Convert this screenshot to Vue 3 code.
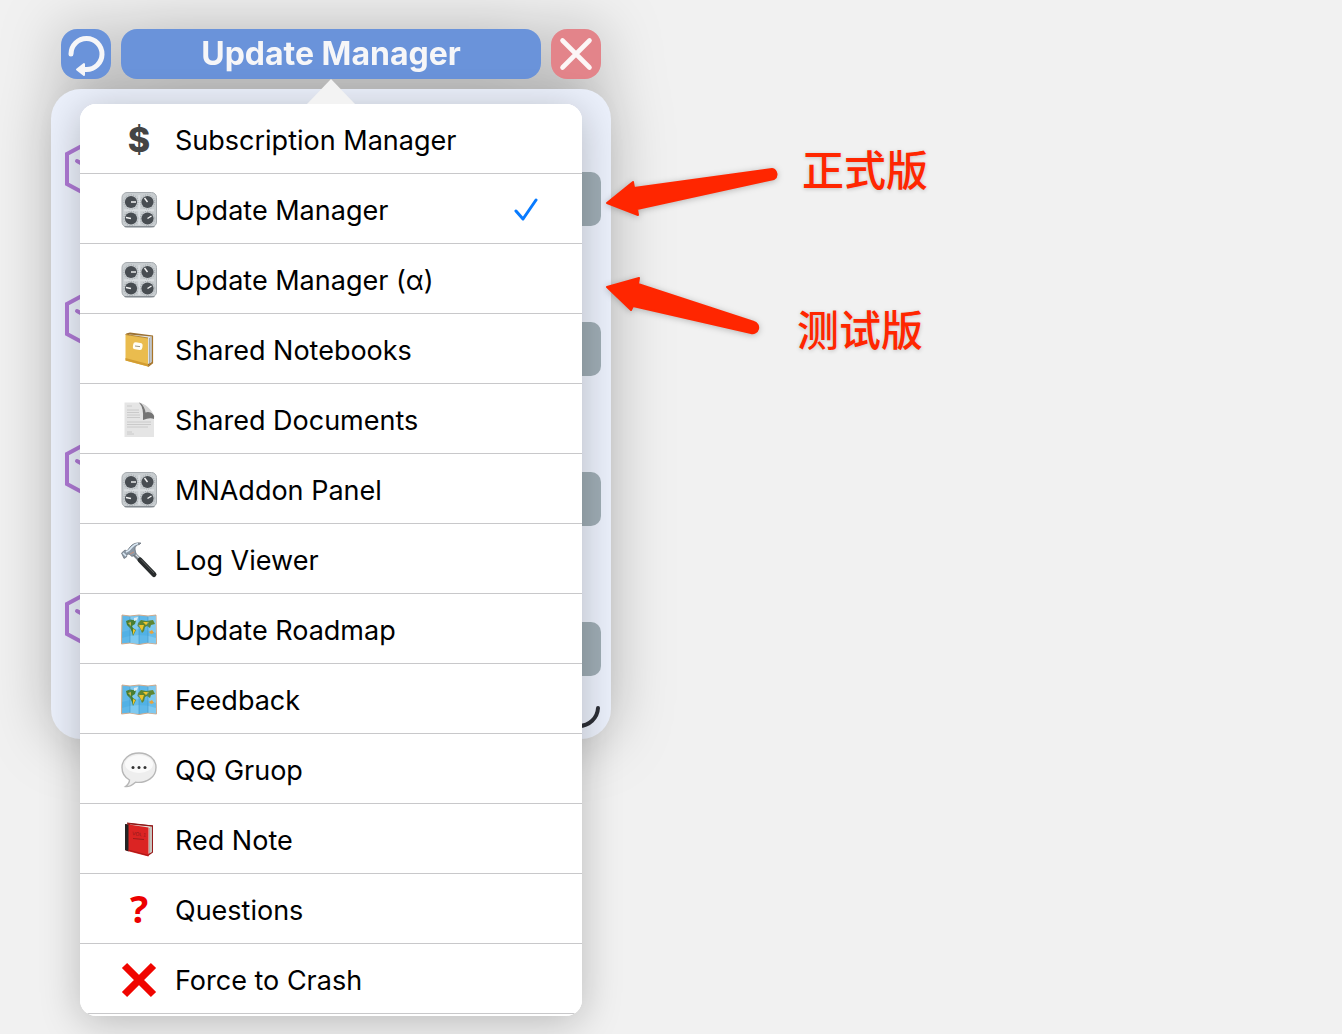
<script setup>
import { ref } from 'vue';

const items = [
  { name: 'Subscription Manager', icon: 'dollar' },
  { name: 'Update Manager', icon: 'knobs' },
  { name: 'Update Manager (α)', icon: 'knobs' },
  { name: 'Shared Notebooks', icon: 'notebook' },
  { name: 'Shared Documents', icon: 'page' },
  { name: 'MNAddon Panel', icon: 'knobs' },
  { name: 'Log Viewer', icon: 'hammer' },
  { name: 'Update Roadmap', icon: 'map' },
  { name: 'Feedback', icon: 'map' },
  { name: 'QQ Gruop', icon: 'bubble' },
  { name: 'Red Note', icon: 'book' },
  { name: 'Questions', icon: 'question' },
  { name: 'Force to Crash', icon: 'cross' },
];

const knobs = [
  { x: 10, y: 10, dx: 5, dy: 0 },
  { x: 26.5, y: 10, dx: -3, dy: -4 },
  { x: 10, y: 26.5, dx: -5, dy: -1 },
  { x: 26.5, y: 26.5, dx: 4, dy: -2.5 },
];

const current = ref(1);
</script>

<template>
  <main class="page">
    <section class="window">
      <div class="frame">
        <header class="bar">
          <button class="tool" type="button" aria-label="Refresh">
            <svg viewBox="0 0 50 50">
              <path d="M10 25A15.5 15.5 0 1 1 25 40.5H22" fill="none" stroke="#f6f6f8" stroke-width="5" stroke-linecap="round" />
              <path d="M16 40.5L23 35V46Z" fill="#f6f6f8" stroke="#f6f6f8" stroke-width="2" stroke-linejoin="round" />
            </svg>
          </button>
          <button class="title" type="button">Update Manager</button>
          <button class="tool close" type="button" aria-label="Close">
            <svg viewBox="0 0 50 50">
              <path d="M11.5 11.5L38.5 38.5M38.5 11.5L11.5 38.5" fill="none" stroke="#fcf6f6" stroke-width="4.6" stroke-linecap="round" />
            </svg>
          </button>
        </header>

        <div class="panel">
          <div v-for="n in 4" :key="n" class="addon">
            <svg class="box" viewBox="0 0 60 60">
              <path d="M32 1L6 15V45L32 59L58 45V15Z" />
              <path d="M16 22L32 31L48 22M32 31V50" />
            </svg>
            <button class="install" type="button" aria-label="Install"></button>
          </div>
          <svg class="grip" viewBox="0 0 24 24">
            <path d="M21 3A19 19 0 0 1 2 21" />
          </svg>
        </div>
      </div>

      <nav class="menu">
        <svg class="caret" viewBox="0 0 48 25"><path d="M24 0L48 25H0Z" /></svg>
        <ul class="list">
          <li v-for="(el, i) in items" :key="i">
            <button class="item" type="button" @click="current = i">
              <svg class="icon" viewBox="0 0 36 36">
                <text v-if="el.icon === 'dollar'" class="dollar" x="18" y="30" text-anchor="middle">$</text>

                <g v-else-if="el.icon === 'knobs'">
                  <rect x="1" y="0.5" width="34.5" height="34.5" rx="5" fill="#c8cdd0" stroke="#a6abaf" />
                  <path d="M4 34.6H33" stroke="#858b91" stroke-width="1.2" stroke-linecap="round" />
                  <path d="M18.2 3V33M3 18.2H33" stroke="#d9dde0" stroke-width="2" />
                  <g v-for="(k, j) in knobs" :key="j">
                    <circle :cx="k.x" :cy="k.y" r="7.2" fill="none" stroke="#8d9398" stroke-width="0.8" stroke-dasharray="0.8 1.6" />
                    <circle :cx="k.x" :cy="k.y" r="6.1" fill="#484d52" />
                    <path :d="`M${k.x} ${k.y}l${k.dx} ${k.dy}`" stroke="#f5f5f5" stroke-width="1.4" />
                  </g>
                </g>

                <g v-else-if="el.icon === 'notebook'">
                  <path d="M5 1.5L9 0.5L32 3.5L31 31L27 34Z" fill="#9c7132" />
                  <path d="M8 2.5L31 4.5V30L27 32Z" fill="#dfe2e4" />
                  <path d="M28.5 6V31M30 5V30" stroke="#929a9f" stroke-width="0.8" />
                  <path d="M31.5 4V31L27 34.5" fill="none" stroke="#a97528" stroke-width="1.2" />
                  <path d="M4.5 2.5L27 6V34.5L4.5 28.5Z" fill="#eabc4e" />
                  <path d="M4.5 26L27 32V34.5L4.5 28.5Z" fill="#d39d32" />
                  <path d="M4.5 2.5L27 6" stroke="#b88a37" />
                  <rect x="12" y="10.5" width="9.5" height="7" rx="2.5" fill="#fffdf3" transform="rotate(8 16 14)" />
                  <path d="M14 14L19 14.6" stroke="#8e8871" stroke-width="0.9" />
                </g>

                <g v-else-if="el.icon === 'page'">
                  <path d="M3.5 0.5H19Q21 8 24 12L33 16V35H3.5Z" fill="#e5e5e5" />
                  <path d="M18 0.5Q23 2 25 5.5L32 12Q34 14 33 17Q29 15 22 18Q23 6 18 0.5Z" fill="#757575" />
                  <path d="M19 0.5Q28 4 32.5 12Q28 9 24.500 10.500Q24 5 19 0.500Z" fill="#d4d4d4" />
                  <path d="M6 4H11M6 8H18M6 10.5H18M6 13H19M6 15.5H19M6 20H30M6 22.5H30M6 25H27M6 30H11M6 32H13" stroke="#c6c6c6" stroke-width="0.9" />
                </g>

                <g v-else-if="el.icon === 'hammer'">
                  <path d="M12 11L20 19" stroke="#777f87" stroke-width="4" />
                  <path d="M13 11L20 18" stroke="#d4dbe0" stroke-width="1.2" />
                  <path d="M19 18L33 32.5" stroke="#292c2d" stroke-width="5" stroke-linecap="round" />
                  <path d="M20 17.5L33 31" stroke="#5c6061" stroke-width="1" />
                  <path d="M0.5 11L4 8L6 9L9 5Q13 0 20 1L18.5 2.5Q14 3 14 7L15 12L11 14.5L8 12L6 12.5L5.5 15L3 16.5Z" fill="#8b98a5" stroke="#666f78" stroke-width="0.7" />
                  <path d="M5 10Q8 9 11 5Q13 2.5 17 1.5M2 11L5 14" fill="none" stroke="#dbe9f4" stroke-width="1.6" />
                  <path d="M9 12L13 10" stroke="#c78f7b" stroke-width="1" />
                </g>

                <g v-else-if="el.icon === 'map'">
                  <path d="M1 3L9 4L18 3L27 4L35 3L35.500 32L27 31L18 32.5L9 31L0.5 32Z" fill="#5fb8e9" stroke="#d0aa8b" />
                  <path d="M9 4.5L18 4V32L9 31ZM27 4.5L35 4V31.5L27 31Z" fill="#91d3f4" opacity="0.65" />
                  <path d="M1 20Q18 14 35 21V26Q18 20 1 26Z" fill="#3aa4df" opacity="0.35" />
                  <path d="M5 9L9 7.5L15 8.5L14 12L11 14L12 16L15 18L13.5 21L12 24L11 20L9 16L6 13Z" fill="#487d32" />
                  <path d="M17 11L20 8L25 9L32 8L34 12L30 13L29 16L26 14L24 15L23 19L21 21L19 16L16.5 14Z" fill="#5f8633" />
                  <path d="M7 11L10 10L10 14ZM12 17L14.5 18L12 23ZM17.5 13L23 13L21 19ZM22 10L28 10L25 13Z" fill="#f0c42d" />
                  <path d="M28 20L31 18L33 21L30 22Z" fill="#e7a33a" />
                  <path d="M13 6L17 5L16 8L13 9Z" fill="#dfedf0" />
                  <path d="M9 5V31M18 4V32M27 5V31" stroke="#3d8ebd" stroke-width="0.5" />
                </g>

                <g v-else-if="el.icon === 'bubble'">
                  <path d="M18 1C8 1 1 7.500 1 15.500C1 21 4 25.500 8.500 28C8.500 31 6.500 33 4.500 34.500C9 35 12.500 32 14.500 30.200C26 31.500 35 25 35 15.500C35 7 27.500 1 18 1Z" fill="#eeeeee" stroke="#b7b7b7" stroke-width="1.4" />
                  <ellipse cx="18" cy="12" rx="14" ry="9" fill="#fafafa" />
                  <circle v-for="x in [12, 18, 24]" :key="x" :cx="x" cy="15.5" r="1.5" fill="#333" />
                </g>

                <g v-else-if="el.icon === 'book'">
                  <path d="M6 1L32 3.5V30.5L27 34Z" fill="#971b1b" />
                  <path d="M9 2.5L31 4.5V30L27 32Z" fill="#e1ded8" />
                  <path d="M28.5 6V31M30 5V30" stroke="#9c9892" stroke-width="0.7" />
                  <path d="M4.5 2L27.5 5.5V34.5L4.5 28.5Z" fill="#db2423" />
                  <path d="M4 2L7.5 2.5V29.5L4 28Z" fill="#252424" />
                  <path d="M6 1L32 4" stroke="#8e1717" />
                  <path d="M7 28L27.5 33.5" stroke="#a91919" stroke-width="1.2" />
                  <path d="M12 16.5L23 17.5" stroke="#8d1919" stroke-width="0.8" />
                  <text class="volume" x="11" y="13" transform="rotate(7 11 13)">VOL 1</text>
                </g>

                <text v-else-if="el.icon === 'question'" class="question" x="18" y="31" text-anchor="middle">?</text>

                <path v-else d="M3.5 3.5L32.5 32.5M32.5 3.5L3.5 32.5" stroke="#f00500" stroke-width="7.4" />
              </svg>
              <span class="name">{{ el.name }}</span>
              <svg v-if="i === current" class="check" viewBox="0 0 24 24">
                <path d="M2 13L9 21L22 2" />
              </svg>
            </button>
          </li>
        </ul>
      </nav>
    </section>

    <div class="note release">
      <svg class="arrow" viewBox="0 0 180 56">
        <path d="M4 39L30 18L31 24L169 5A5.5 5.5 0 0 1 171 15L34 45L35 51Z" />
      </svg>
      <span>正式版</span>
    </div>
    <div class="note beta">
      <svg class="arrow" viewBox="0 0 160 66">
        <path d="M4 13L36 4L35 10L151 48A5.5 5.5 0 0 1 148 59L30 32L28 36Z" />
      </svg>
      <span>测试版</span>
    </div>
  </main>
</template>

<style>
body {
  margin: 0;
  background: #f1f1f1;
}
</style>

<style scoped>
* {
  box-sizing: border-box;
}

button {
  border: 0;
  padding: 0;
  font-family: inherit;
  cursor: pointer;
}

svg {
  display: block;
}

.page {
  position: relative;
  min-height: 100vh;
  padding: 29px 51px 17px;
  overflow: hidden;
  font-family: Inter, 'Noto Sans CJK SC', sans-serif;
}

.window {
  position: relative;
  max-width: 560px;
  min-height: 988px;
}

.frame {
  filter: drop-shadow(0 0 30px rgba(0, 0, 0, 0.26));
}

.bar {
  display: flex;
  gap: 10px;
  padding: 0 10px;
}

.tool {
  width: 50px;
  height: 50px;
  flex: none;
  border-radius: 16px;
  background: #6a93da;
}

.tool.close {
  background: #e3848a;
}

.title {
  flex: 1;
  height: 50px;
  border-radius: 16px;
  background: #6a93da;
  color: #f6f6f8;
  font-size: 32px;
  font-weight: 700;
  line-height: 50px;
}

.panel {
  position: relative;
  margin-top: 10px;
  padding: 50px 10px 0;
  border-radius: 30px;
  background: #ebf0fb;
}

.addon {
  display: flex;
  justify-content: space-between;
  height: 150px;
}

.box {
  width: 60px;
  height: 60px;
  fill: none;
  stroke: #ae79d4;
  stroke-width: 4;
  stroke-linecap: round;
}

.install {
  width: 90px;
  height: 54px;
  margin-top: 33px;
  border-radius: 10px;
  background: #9fadb5;
}

.grip {
  position: absolute;
  right: 10px;
  bottom: 10px;
  width: 24px;
  height: 24px;
  fill: none;
  stroke: #2d2f36;
  stroke-width: 4;
  stroke-linecap: round;
}

.menu {
  position: absolute;
  top: 75px;
  left: 29px;
  right: 29px;
  border-radius: 16px;
  box-shadow: 0 6px 40px rgba(0, 0, 0, 0.23);
}

.caret {
  position: absolute;
  bottom: 100%;
  left: 50%;
  width: 48px;
  height: 25px;
  margin-left: -24px;
  fill: #f3f3f3;
}

.list {
  margin: 0;
  padding: 0 0 2px;
  overflow: hidden;
  list-style: none;
  border-radius: 16px;
  background: #fff;
}

.item {
  display: flex;
  align-items: center;
  gap: 18px;
  width: 100%;
  height: 70px;
  padding: 2px 44px 0 41px;
  border-bottom: 1px solid #c8c8ca;
  background: #fff;
  color: #000;
  font-size: 27px;
  line-height: 36px;
  text-align: left;
}

.icon {
  width: 36px;
  height: 36px;
  flex: none;
  overflow: visible;
}

.dollar {
  fill: #444;
  font: 800 34px Inter, sans-serif;
}

.question {
  fill: #ec0000;
  font: 700 38px 'Noto Sans', sans-serif;
}

.volume {
  fill: #8d1919;
  font: 5px 'Liberation Sans', sans-serif;
}

.name {
  flex: 1;
  padding-top: 2px;
  white-space: nowrap;
}

.check {
  width: 24px;
  height: 24px;
  fill: none;
  stroke: #087bff;
  stroke-width: 3;
  stroke-linecap: round;
  stroke-linejoin: round;
}

.note {
  position: absolute;
  left: 603px;
  display: flex;
  color: #ff2600;
  font-family: 'Noto Sans CJK SC', sans-serif;
  font-size: 42px;
  font-weight: 500;
  line-height: 44px;
  white-space: nowrap;
  text-shadow: 0 1px 4px rgba(0, 0, 0, 0.2);
}

.arrow {
  fill: #ff2600;
  stroke: #ff2600;
  stroke-width: 2;
  stroke-linejoin: round;
  overflow: visible;
  filter: drop-shadow(0 1px 3px rgba(0, 0, 0, 0.25));
}

.release {
  top: 146px;
  gap: 19px;
}

.release .arrow {
  width: 180px;
  height: 56px;
  margin-top: 18px;
}

.beta {
  top: 274px;
  gap: 34px;
}

.beta .arrow {
  width: 160px;
  height: 66px;
}

.beta span {
  margin-top: 32px;
}
</style>
